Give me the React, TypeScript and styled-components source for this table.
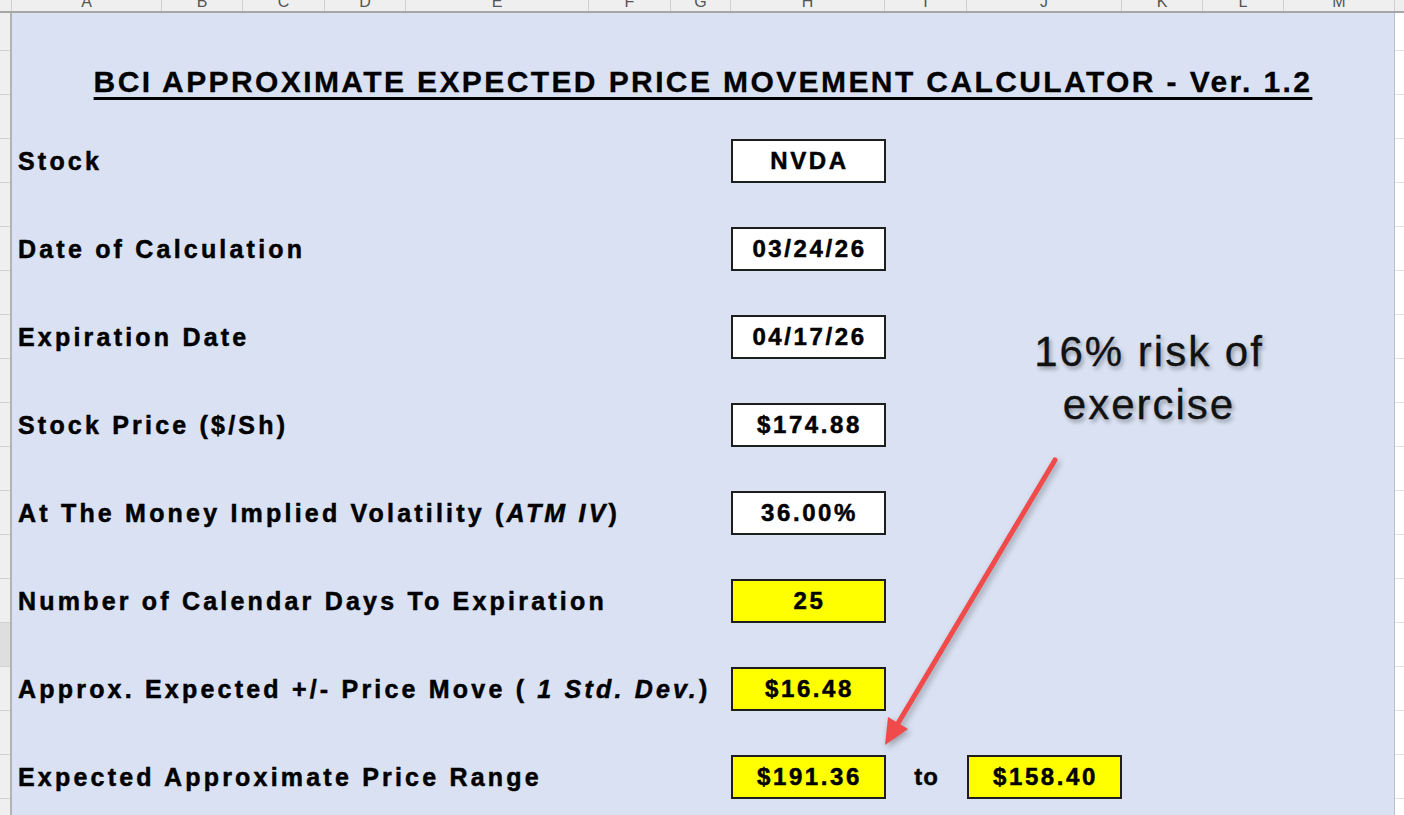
import React, {FC} from 'react';
import styled, {createGlobalStyle} from 'styled-components';

const GlobalStyle = createGlobalStyle`
  html, body {
    margin: 0;
    padding: 0;
    background: #ffffff;
  }
`;

const COLUMNS: [string, number][] = [
  ['A', 150], ['B', 81], ['C', 82], ['D', 81], ['E', 183], ['F', 82], ['G', 60],
  ['H', 154], ['I', 82], ['J', 155], ['K', 81], ['L', 81], ['M', 111], ['N', 40],
];

const ROW_COUNT = 18;
const SELECTED_ROW = 14;

const Sheet = styled.div`
  position: relative;
  width: 1404px;
  height: 815px;
  overflow: hidden;
  background: #ffffff;
  font-family: "Liberation Sans", Arial, sans-serif;
  color: #000;
`;

const ColumnHeader = styled.div`
  display: flex;
  height: 13px;
  background: #efefef;
  border-bottom: 2px solid #a6a6a6;
  box-sizing: border-box;
  overflow: hidden;
`;

const HeaderCell = styled.div<{ $w: number }>`
  flex: 0 0 ${p => p.$w}px;
  box-sizing: border-box;
  border-right: 1px solid #cfcfcf;
  display: flex;
  justify-content: center;
  overflow: hidden;
  color: #555;
  font-size: 16px;
  line-height: 16px;

  span {
    margin-top: -6px;
  }
`;

const Body = styled.div`
  display: flex;
  height: 802px;
`;

const RowHeader = styled.div`
  flex: 0 0 12px;
  box-sizing: border-box;
  border-right: 2px solid #b3b3b3;
  background: #efefef;
  display: flex;
  flex-direction: column;
  overflow: hidden;
`;

const RowHeaderCell = styled.div<{ $first?: boolean; $selected?: boolean }>`
  flex: 0 0 ${p => (p.$first ? 38 : 44)}px;
  box-sizing: border-box;
  border-bottom: 1px solid #d2d2d2;
  background: ${p => (p.$selected ? '#dedede' : 'transparent')};
`;

const Panel = styled.div`
  flex: 0 0 1383px;
  box-sizing: border-box;
  background: #d9e1f2;
  border-right: 1px solid #b9bfcc;
  padding-left: 6px;
`;

const Gutter = styled.div`
  flex: 1;
  display: flex;
  flex-direction: column;
  overflow: hidden;
`;

const GutterCell = styled.div<{ $first?: boolean }>`
  flex: 0 0 ${p => (p.$first ? 38 : 44)}px;
  box-sizing: border-box;
  border-bottom: 1px solid #e1e1e1;
`;

const TitleRow = styled.div`
  height: 126px;
  box-sizing: border-box;
  padding-top: 52px;
  padding-right: 6px;
  display: flex;
  justify-content: center;
`;

const Title = styled.h1`
  margin: 0;
  font-size: 30px;
  line-height: 34px;
  font-weight: 700;
  letter-spacing: 2.4px;
  -webkit-text-stroke: 0.3px #000;
  text-decoration: underline;
  text-decoration-thickness: 2.5px;
  text-underline-offset: 5px;
`;

const Row = styled.div`
  display: grid;
  grid-template-columns: 713px 155px 81px 155px;
  align-items: center;
  height: 44px;
  margin-bottom: 44px;
`;

const Label = styled.div`
  font-size: 25px;
  font-weight: 700;
  letter-spacing: 3.2px;
  -webkit-text-stroke: 0.5px #000;
  white-space: nowrap;

  em {
    font-style: italic;
  }
`;

const ValueBox = styled.div<{ $tone: 'white' | 'yellow' }>`
  height: 44px;
  box-sizing: border-box;
  border: 2px solid #1e1e1e;
  background: ${p => (p.$tone === 'yellow' ? '#ffff00' : '#ffffff')};
  display: flex;
  align-items: center;
  justify-content: center;
  font-size: 24px;
  font-weight: 700;
  letter-spacing: 2.6px;
  -webkit-text-stroke: 0.5px #000;
  padding-left: 2px;
`;

const Joiner = styled.div`
  text-align: center;
  font-size: 24px;
  font-weight: 700;
  letter-spacing: 1px;
  -webkit-text-stroke: 0.4px #000;
`;

const Callout = styled.div`
  position: absolute;
  left: 999px;
  top: 325px;
  width: 300px;
  text-align: center;
  font-size: 42px;
  line-height: 53px;
  letter-spacing: 2px;
  color: #111;
  -webkit-text-stroke: 0.3px #111;
  text-shadow: 2px 3px 4px rgba(0, 0, 0, 0.35);
`;

const Overlay = styled.svg`
  position: absolute;
  left: 0;
  top: 0;
  pointer-events: none;
  filter: drop-shadow(2px 3px 3px rgba(0, 0, 0, 0.3));
`;

interface Field {
  label: React.ReactNode;
  value: string;
  tone: 'white' | 'yellow';
  extra?: string;
}

const FIELDS: Field[] = [
  {label: 'Stock', value: 'NVDA', tone: 'white'},
  {label: 'Date of Calculation', value: '03/24/26', tone: 'white'},
  {label: 'Expiration Date', value: '04/17/26', tone: 'white'},
  {label: 'Stock Price ($/Sh)', value: '$174.88', tone: 'white'},
  {label: <>At The Money Implied Volatility (<em>ATM IV</em>)</>, value: '36.00%', tone: 'white'},
  {label: 'Number of Calendar Days To Expiration', value: '25', tone: 'yellow'},
  {label: <>Approx. Expected +/- Price Move (<em> 1 Std. Dev.</em>)</>, value: '$16.48', tone: 'yellow'},
  {label: 'Expected Approximate Price Range', value: '$191.36', tone: 'yellow', extra: '$158.40'},
];

const App: FC = () => {
  return (
    <Sheet>
      <GlobalStyle/>
      <ColumnHeader>
        <HeaderCell $w={12}/>
        {COLUMNS.map(([name, w]) => (
          <HeaderCell key={name} $w={w}><span>{name}</span></HeaderCell>
        ))}
      </ColumnHeader>
      <Body>
        <RowHeader>
          {Array.from({length: ROW_COUNT}).map((_, i) => (
            <RowHeaderCell key={i} $first={i === 0} $selected={i === SELECTED_ROW}/>
          ))}
        </RowHeader>
        <Panel>
          <TitleRow>
            <Title>BCI APPROXIMATE EXPECTED PRICE MOVEMENT CALCULATOR - Ver. 1.2</Title>
          </TitleRow>
          {FIELDS.map((f, i) => (
            <Row key={i}>
              <Label>{f.label}</Label>
              <ValueBox $tone={f.tone}>{f.value}</ValueBox>
              {f.extra && (
                <>
                  <Joiner>to</Joiner>
                  <ValueBox $tone={f.tone}>{f.extra}</ValueBox>
                </>
              )}
            </Row>
          ))}
        </Panel>
        <Gutter>
          {Array.from({length: ROW_COUNT}).map((_, i) => (
            <GutterCell key={i} $first={i === 0}/>
          ))}
        </Gutter>
      </Body>

      <Callout>16% risk of<br/>exercise</Callout>

      <Overlay width={1404} height={815} viewBox="0 0 1404 815">
        <line x1={1055} y1={460} x2={897} y2={725} stroke="#f04a4a" strokeWidth={5} strokeLinecap="round"/>
        <polygon points="885,745 888,717 908,729" fill="#f04a4a"/>
      </Overlay>
    </Sheet>
  );
};

export default App;
